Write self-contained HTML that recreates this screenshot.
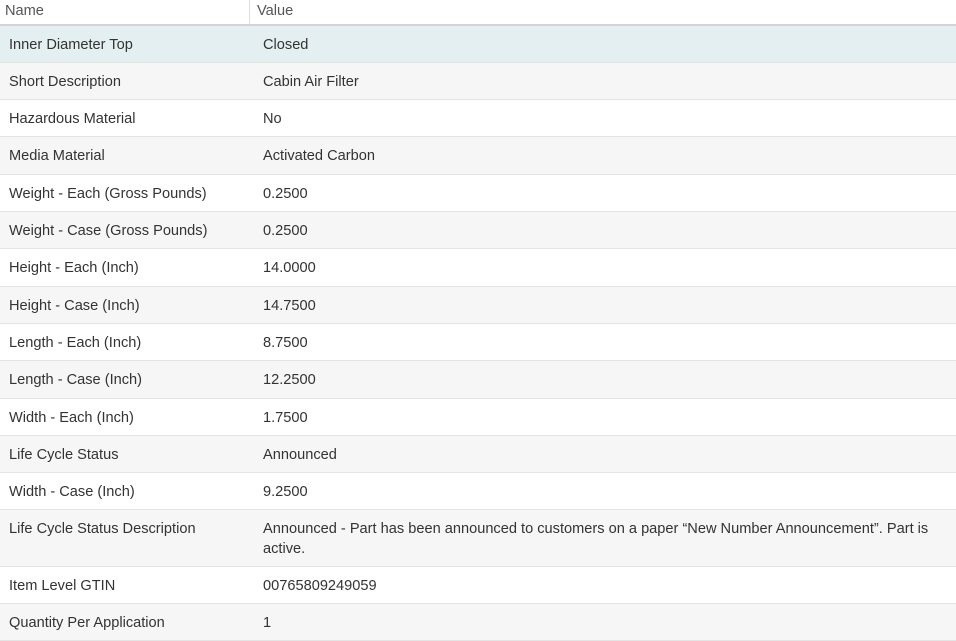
<!DOCTYPE html>
<html><head><style>
body{margin:0;width:956px;height:634px;overflow:hidden;background:#fff;font-family:"Liberation Sans",sans-serif;font-size:14.6px;color:#333}
.h{height:24px;border-bottom:2px solid #d4d4d4;position:relative;color:#555;font-size:14.6px}
.h span{position:absolute;top:3px}
.h .d{position:absolute;left:249px;top:0;width:1px;height:24px;background:#ddd}
.r{position:relative;border-bottom:1px solid #e4e4e4;box-sizing:border-box}
.r .n{position:absolute;left:9px;top:11px}
.r .v{position:absolute;left:263px;top:11px;right:8px;line-height:20px;margin-top:-2px}
.r.hl{background:#e3eff1}
</style></head><body>
<div class="h"><span style="left:5px">Name</span><div class="d"></div><span style="left:257px">Value</span></div>
<div id="t">
<div class="r hl" style="height:37px"><span class="n">Inner Diameter Top</span><span class="v">Closed</span></div>
<div class="r" style="height:37px;background:#f6f6f6"><span class="n">Short Description</span><span class="v">Cabin Air Filter</span></div>
<div class="r" style="height:37px"><span class="n">Hazardous Material</span><span class="v">No</span></div>
<div class="r" style="height:38px;background:#f6f6f6"><span class="n">Media Material</span><span class="v">Activated Carbon</span></div>
<div class="r" style="height:37px"><span class="n">Weight - Each (Gross Pounds)</span><span class="v">0.2500</span></div>
<div class="r" style="height:37px;background:#f6f6f6"><span class="n">Weight - Case (Gross Pounds)</span><span class="v">0.2500</span></div>
<div class="r" style="height:38px"><span class="n">Height - Each (Inch)</span><span class="v">14.0000</span></div>
<div class="r" style="height:37px;background:#f6f6f6"><span class="n">Height - Case (Inch)</span><span class="v">14.7500</span></div>
<div class="r" style="height:37px"><span class="n">Length - Each (Inch)</span><span class="v">8.7500</span></div>
<div class="r" style="height:38px;background:#f6f6f6"><span class="n">Length - Case (Inch)</span><span class="v">12.2500</span></div>
<div class="r" style="height:37px"><span class="n">Width - Each (Inch)</span><span class="v">1.7500</span></div>
<div class="r" style="height:37px;background:#f6f6f6"><span class="n">Life Cycle Status</span><span class="v">Announced</span></div>
<div class="r" style="height:37px"><span class="n">Width - Case (Inch)</span><span class="v">9.2500</span></div>
<div class="r" style="height:57px;background:#f6f6f6"><span class="n">Life Cycle Status Description</span><span class="v">Announced - Part has been announced to customers on a paper “New Number Announcement”. Part is<br>active.</span></div>
<div class="r" style="height:37px"><span class="n">Item Level GTIN</span><span class="v">00765809249059</span></div>
<div class="r" style="height:37px;background:#f6f6f6"><span class="n">Quantity Per Application</span><span class="v">1</span></div>
</div>
</body></html>
